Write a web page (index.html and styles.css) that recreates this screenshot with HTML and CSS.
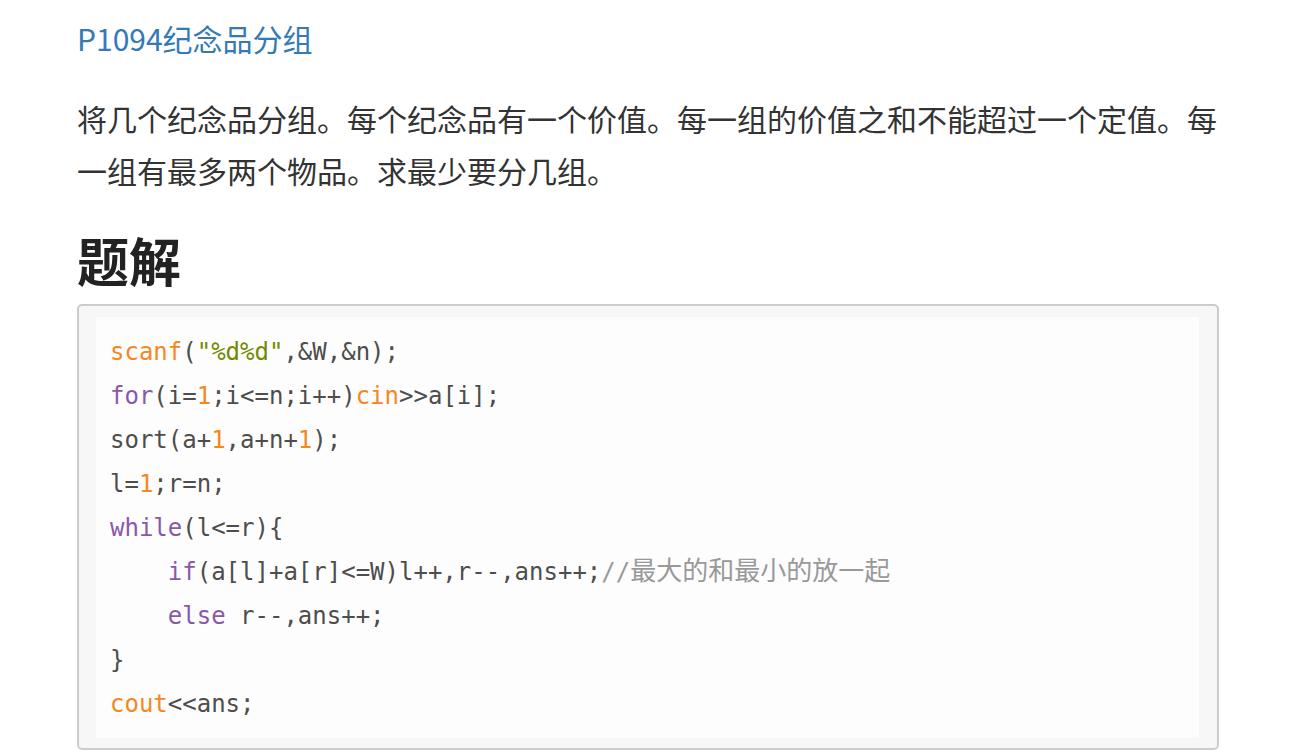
FILE: index.html
```html
<!DOCTYPE html>
<html lang="zh-CN">
<head>
<meta charset="utf-8">
<title>P1094纪念品分组</title>
<link rel="stylesheet" href="styles.css">
</head>
<body>
<main class="article">
  <a class="title" href="#">P1094纪念品分组</a>
  <p class="desc">将几个纪念品分组。每个纪念品有一个价值。每一组的价值之和不能超过一个定值。每一组有最多两个物品。求最少要分几组。</p>
  <h2 class="heading">题解</h2>
  <div class="code-box">
<pre class="code"><code><span class="fn">scanf</span>(<span class="str">"%d%d"</span>,&amp;W,&amp;n);
<span class="kw">for</span>(i=<span class="num">1</span>;i&lt;=n;i++)<span class="fn">cin</span>&gt;&gt;a[i];
sort(a+<span class="num">1</span>,a+n+<span class="num">1</span>);
l=<span class="num">1</span>;r=n;
<span class="kw">while</span>(l&lt;=r){
    <span class="kw">if</span>(a[l]+a[r]&lt;=W)l++,r--,ans++;<span class="cm">//<span class="cjk">最大的和最小的放一起</span></span>
    <span class="kw">else</span> r--,ans++;
}
<span class="fn">cout</span>&lt;&lt;ans;</code></pre>
  </div>
</main>
</body>
</html>
```

FILE: styles.css
```css
html, body {
  margin: 0;
  padding: 0;
  background: #ffffff;
}

body {
  font-family: "Noto Sans CJK SC", "Noto Sans", sans-serif;
  color: #333333;
}

.article {
  width: 1142px;
  padding: 18px 0 0 77px;
  display: flex;
  flex-direction: column;
  align-items: flex-start;
}

.title {
  display: block;
  font-size: 30px;
  line-height: 40px;
  color: #337ab7;
  text-decoration: none;
}

.desc {
  margin: 34px 0 0 0;
  font-size: 30px;
  line-height: 52px;
  color: #333333;
}

.heading {
  margin: 34px 0 0 0;
  font-size: 52px;
  line-height: 60px;
  font-weight: 700;
  color: #222222;
}

.code-box {
  box-sizing: border-box;
  width: 1142px;
  margin-top: 14px;
  border: 2px solid #cccccc;
  border-radius: 5px;
  background: #f7f7f7;
  padding: 11px 18px 10px 17px;
}

.code {
  margin: 0;
  background: #fdfdfd;
  padding: 13px 14px 12px 14px;
  font-family: "DejaVu Sans Mono", "Liberation Mono", "Noto Sans CJK SC", monospace;
  font-size: 24px;
  line-height: 44px;
  color: #4d4d4c;
  white-space: pre;
}

.code code {
  font-family: inherit;
}

.kw { color: #8959a8; }
.fn { color: #f5871f; }
.num { color: #f5871f; }
.str { color: #718c00; }
.cm { color: #999999; }

.cjk {
  font-family: "Noto Sans CJK SC", sans-serif;
  font-size: 26px;
  line-height: 24px;
}
```
